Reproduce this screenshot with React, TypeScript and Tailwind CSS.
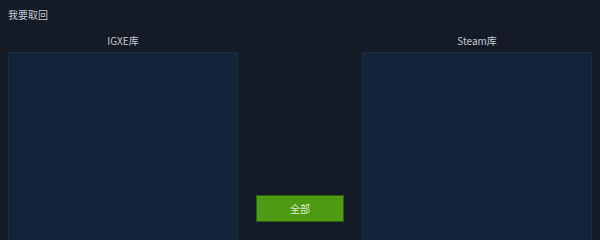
import React from 'react';

const font = { fontFamily: '"Noto Sans CJK SC", "Liberation Sans", sans-serif' };

function Library({ title }: { title: string }) {
  return (
    <div className="flex w-[230px] flex-col">
      <div className="flex h-[24px] items-center justify-center text-[10px] text-[#c3c8d0]">{title}</div>
      <div className="h-[200px] border border-[#1c2c41] bg-[#13233a]" />
    </div>
  );
}

export default function App() {
  return (
    <div className="h-[240px] w-[600px] overflow-hidden bg-[#141b26]" style={font}>
      <div className="flex h-[28px] items-center px-[8px] text-[10px] text-[#c5cad1]">我要取回</div>
      <div className="flex justify-between px-[8px]">
        <Library title="IGXE库" />
        <div className="flex flex-col items-center justify-start pt-[167px]">
          <button className="h-[27px] w-[88px] border border-[#2f5e0c] bg-[#4e9a13] text-[10px] text-[#dfeecf]">全部</button>
        </div>
        <Library title="Steam库" />
      </div>
    </div>
  );
}
